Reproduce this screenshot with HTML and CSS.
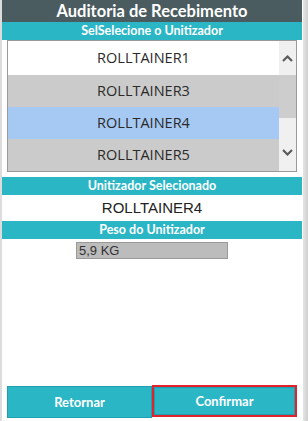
FILE: index.html
```html
<!DOCTYPE html>
<html lang="pt">
<head>
    <meta charset="UTF-8" />
    <meta name="viewport" content="width=device-width, initial-scale=1.0"/>
    <title>Auditoria de Recebimento</title>
    <link rel="stylesheet" href="styles.css">
</head>
<body>
<div class="pagina">
    <header class="titulo">Auditoria de Recebimento</header>
    <div class="faixa">SelSelecione o Unitizador</div>

    <div class="lista">
        <div class="itens">
            <div class="item">ROLLTAINER1</div>
            <div class="item cinza">ROLLTAINER3</div>
            <div class="item selecionado">ROLLTAINER4</div>
            <div class="item cinza">ROLLTAINER5</div>
        </div>
        <div class="rolagem">
            <div class="seta seta-cima">
                <svg width="11" height="8" viewBox="0 0 11 8"><path d="M1 7 L5.5 2.5 L10 7" fill="none" stroke="#5a5a5a" stroke-width="2.2"/></svg>
            </div>
            <div class="trilho"><div class="polegar"></div></div>
            <div class="seta seta-baixo">
                <svg width="11" height="8" viewBox="0 0 11 8"><path d="M1 1 L5.5 5.5 L10 1" fill="none" stroke="#5a5a5a" stroke-width="2.2"/></svg>
            </div>
        </div>
    </div>

    <div class="faixa faixa-espaco">Unitizador Selecionado</div>
    <div class="valor">ROLLTAINER4</div>
    <div class="faixa">Peso do Unitizador</div>
    <div class="peso">5,9 KG</div>

    <div class="botoes">
        <button class="retornar">Retornar</button>
        <button class="confirmar">Confirmar</button>
    </div>
</div>
<div class="borda"></div>
</body>
</html>
```

FILE: styles.css
```css
html, body {
  margin: 0;
  height: 100%;
}

body {
  display: flex;
  background: white;
  border-left: 2px solid #dcdcdc;
  box-sizing: border-box;
}

.pagina {
  width: 300px;
  display: flex;
  flex-direction: column;
}

.borda {
  width: 5px;
  margin-left: 1px;
  background: linear-gradient(90deg, #e4e4e4, #cfcfcf);
}

.titulo {
  height: 22px;
  line-height: 22px;
  background: #4b5c60;
  color: white;
  text-align: center;
  font-family: Lato, sans-serif;
  font-weight: bold;
  font-size: 16.5px;
}

.faixa {
  height: 18px;
  line-height: 18px;
  background: #2bb6c6;
  color: white;
  text-align: center;
  font-family: Lato, sans-serif;
  font-weight: bold;
  font-size: 12.5px;
}

.faixa-espaco {
  margin-top: 5px;
}

.lista {
  display: flex;
  margin: 0 5px;
  height: 130px;
  border: 1px solid #999;
}

.itens {
  flex: 1;
}

.item {
  height: 32px;
  line-height: 32px;
  text-align: center;
  font-family: "Open Sans", sans-serif;
  font-size: 14.5px;
  color: #2a2a2a;
  background: white;
}

.item:first-child {
  height: 34px;
  line-height: 34px;
}

.cinza { background: #cbcbcb; }
.selecionado { background: #a6c9f4; }

.rolagem {
  width: 17px;
  background: #f0f0f0;
  display: flex;
  flex-direction: column;
}

.seta {
  display: flex;
  justify-content: center;
  align-items: center;
}

.seta-cima { height: 34px; }
.seta-baixo { height: 36px; }

.trilho {
  flex: 1;
}

.polegar {
  height: 43px;
  background: #cdcdcd;
}

.valor {
  height: 26px;
  line-height: 26px;
  text-align: center;
  font-family: "Liberation Sans", Arial, sans-serif;
  font-size: 15px;
  color: #222;
}

.peso {
  width: 148px;
  height: 15px;
  line-height: 15px;
  margin: 3px auto 0;
  padding-left: 2px;
  background: #bcbcbc;
  border: 1px solid #999;
  font-family: "Liberation Sans", Arial, sans-serif;
  font-size: 13px;
  color: #333;
  box-sizing: content-box;
}

.botoes {
  margin: auto 5px 3px;
  display: grid;
  grid-template-columns: 1fr 1fr;
}

button {
  height: 32px;
  background: #2bb6c6;
  color: white;
  font-family: Lato, sans-serif;
  font-weight: bold;
  font-size: 13px;
  cursor: pointer;
}

.retornar {
  border: 1px solid #1f9fae;
  margin-top: 1px;
}

.confirmar {
  border: 2px solid #e3222b;
  outline: 1px solid #1f9fae;
  outline-offset: -3px;
}
```
